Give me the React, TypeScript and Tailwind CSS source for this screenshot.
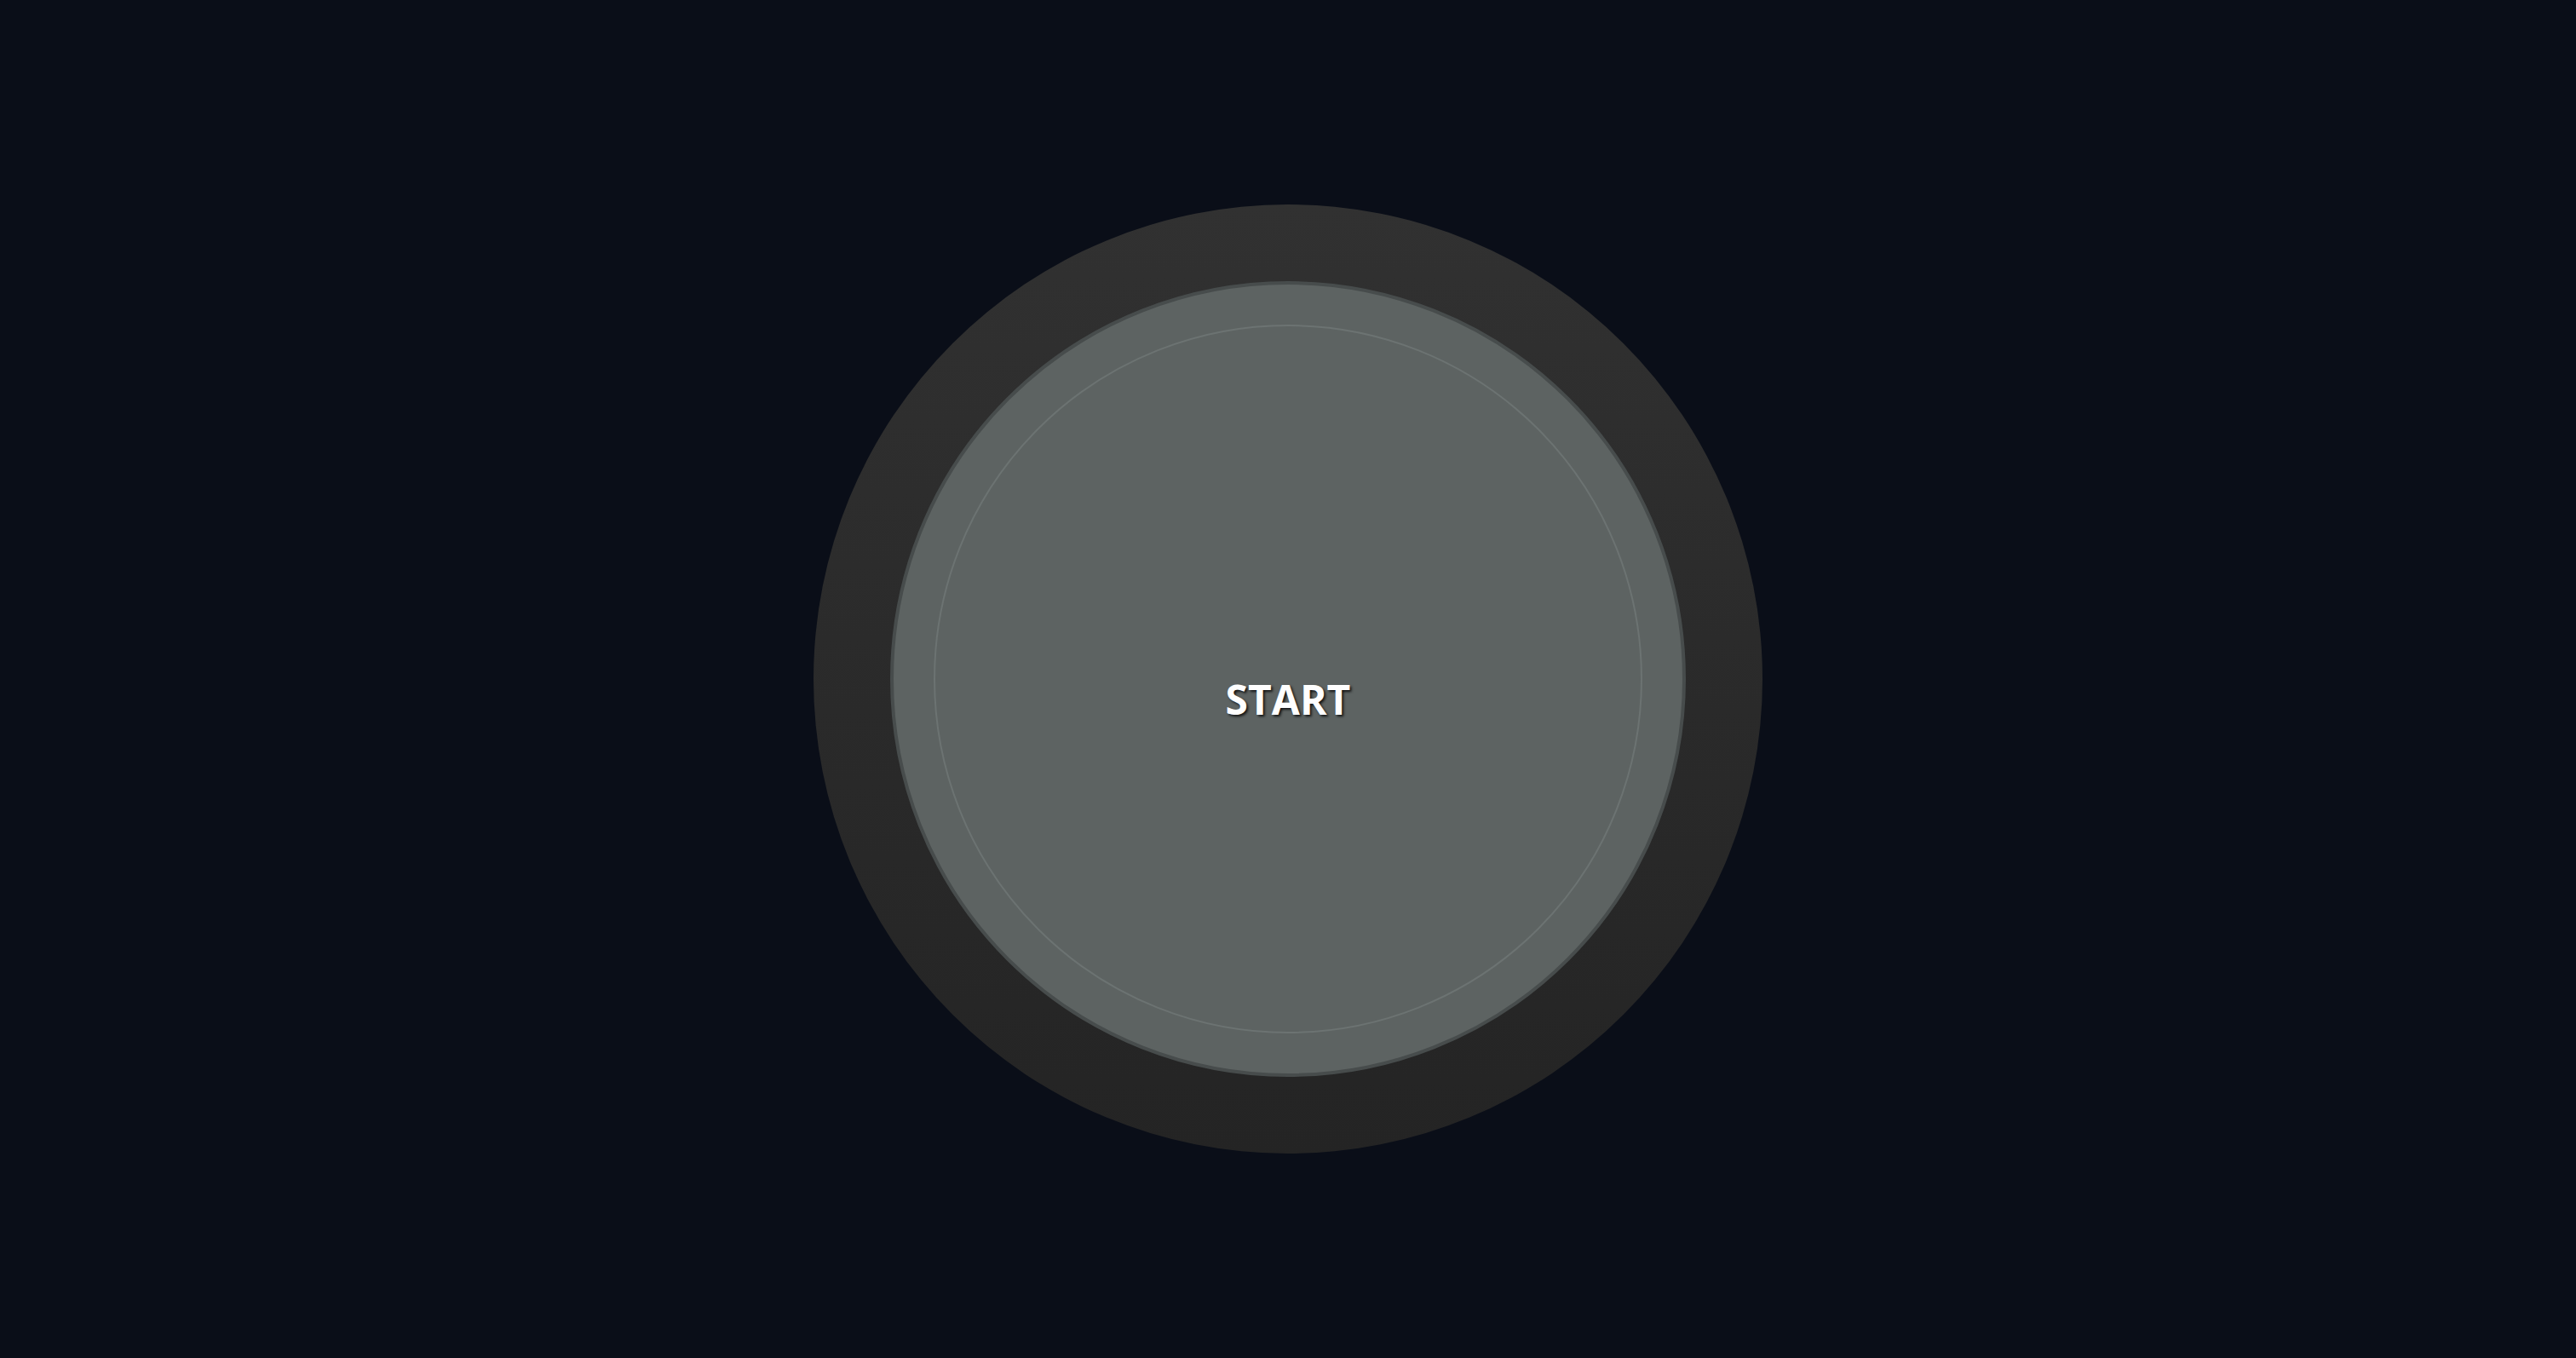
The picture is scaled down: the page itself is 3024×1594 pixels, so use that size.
export default function App() {
  return (
    <div className="flex min-h-screen w-full items-center justify-center bg-[#0a0e18]">
      {/* outer dial */}
      <div className="flex h-[1114px] w-[1114px] items-center justify-center rounded-full bg-gradient-to-b from-[#313131] to-[#242424]">
        {/* button face */}
        <button className="flex h-[934px] w-[934px] items-center justify-center rounded-full border-4 border-[#474c4c] bg-[#5d6362]">
          <div className="flex h-[832px] w-[832px] items-center justify-center rounded-full border-2 border-[#6c7372]">
            <span
              className="mt-12 text-[48px] font-bold leading-none text-white [text-shadow:2px_2px_3px_rgba(0,0,0,0.8)]"
              style={{ fontFamily: '"Open Sans", "Noto Sans", sans-serif' }}
            >
              START
            </span>
          </div>
        </button>
      </div>
    </div>
  );
}
